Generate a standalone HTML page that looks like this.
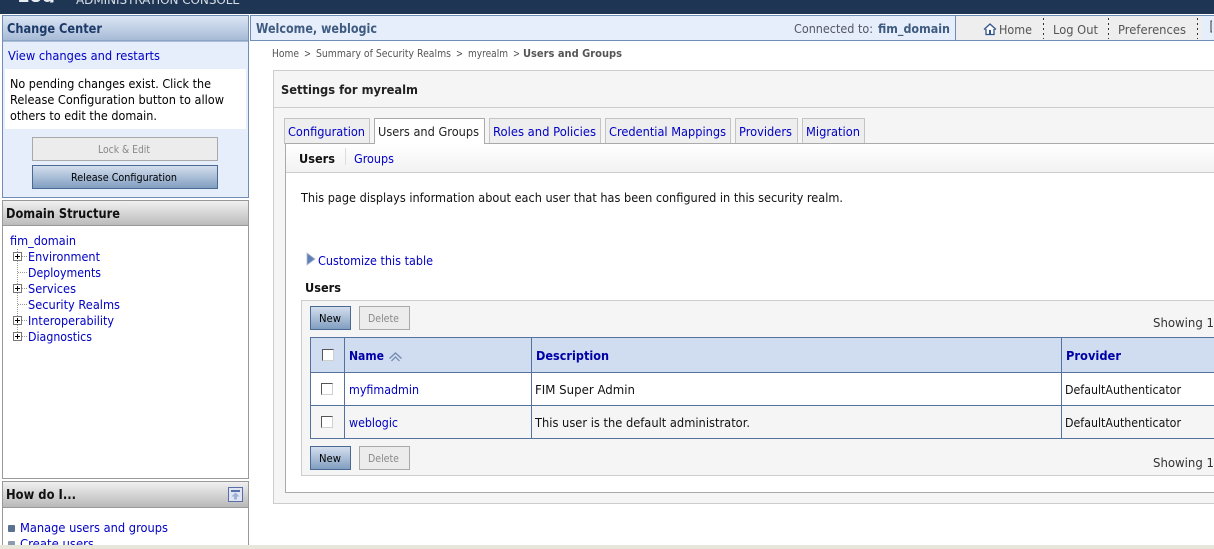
<!DOCTYPE html>
<html lang="en"><head><meta charset="utf-8"><title>Users and Groups</title>
<style>
html,body{margin:0;padding:0;width:1214px;height:549px;overflow:hidden;background:#fff}
svg{display:block}
text{font-family:"DejaVu Sans","Liberation Sans",sans-serif;font-size:12px;fill:#000;white-space:pre}
.b{font-weight:bold}
.l{fill:#0000c4}
.s{font-size:11px}
.g{fill:#555}
</style></head><body>
<svg xmlns="http://www.w3.org/2000/svg" width="1214" height="549" viewBox="0 0 1214 549">
<defs>
<linearGradient id="cc" x1="0" y1="0" x2="0" y2="1"><stop offset="0" stop-color="#dbe6f5"/><stop offset="1" stop-color="#a5b9d5"/></linearGradient>
<linearGradient id="gr" x1="0" y1="0" x2="0" y2="1"><stop offset="0" stop-color="#f0f0f0"/><stop offset="1" stop-color="#b9b9b9"/></linearGradient>
<linearGradient id="bl" x1="0" y1="0" x2="0" y2="1"><stop offset="0" stop-color="#d6e0ee"/><stop offset="1" stop-color="#7f9cc0"/></linearGradient>
<linearGradient id="st" x1="0" y1="0" x2="0" y2="1"><stop offset="0" stop-color="#fff"/><stop offset="1" stop-color="#f2f2f2"/></linearGradient>
<clipPath id="top"><rect x="0" y="0" width="1214" height="14"/></clipPath>
<clipPath id="logo"><rect x="0" y="0" width="70" height="2.500"/></clipPath>
<clipPath id="low"><rect x="0" y="0" width="1214" height="545"/></clipPath>
</defs>

<!-- top bar -->
<rect x="0" y="0" width="1214" height="14" fill="#1f3554"/>
<g clip-path="url(#logo)">
<text x="17" y="2" class="b" style="font-size:15px;fill:#e8edf3" textLength="38" lengthAdjust="spacingAndGlyphs">10g</text>
</g>
<g clip-path="url(#top)">
<text x="76" y="4" style="font-size:12px;fill:#d6dde6" textLength="164" lengthAdjust="spacing">ADMINISTRATION CONSOLE</text>
</g>

<!-- change center -->
<rect x="2.500" y="15.500" width="246" height="182" fill="#e6eefb" stroke="#6f8db5"/>
<rect x="3" y="16" width="245" height="25" fill="url(#cc)"/>
<line x1="3" y1="41" x2="248" y2="41" stroke="#6f8db5"/>
<text x="7" y="33" class="b" style="font-size:13px;fill:#1d3a68" textLength="95" lengthAdjust="spacingAndGlyphs">Change Center</text>
<text x="8" y="60" class="l" textLength="152" lengthAdjust="spacingAndGlyphs">View changes and restarts</text>
<rect x="5" y="69" width="241" height="60" fill="#fff"/>
<text x="10" y="88" textLength="201" lengthAdjust="spacingAndGlyphs">No pending changes exist. Click the</text>
<text x="10" y="104" textLength="214" lengthAdjust="spacingAndGlyphs">Release Configuration button to allow</text>
<text x="10" y="120" textLength="147" lengthAdjust="spacingAndGlyphs">others to edit the domain.</text>
<rect x="32.500" y="137.500" width="185" height="23" fill="#ececec" stroke="#a9a9a9"/>
<text x="98" y="153" class="s" style="fill:#888" textLength="52" lengthAdjust="spacingAndGlyphs">Lock &amp; Edit</text>
<rect x="32.500" y="165.500" width="185" height="23" fill="url(#bl)" stroke="#4a6a94"/>
<text x="71" y="181" class="s" textLength="106" lengthAdjust="spacingAndGlyphs">Release Configuration</text>

<!-- domain structure -->
<rect x="2.500" y="200.500" width="246" height="278" fill="#fff" stroke="#999"/>
<rect x="3" y="201" width="245" height="25" fill="url(#gr)"/>
<line x1="3" y1="225.500" x2="248" y2="225.500" stroke="#999"/>
<text x="6" y="218" class="b" style="font-size:13px;fill:#111" textLength="114" lengthAdjust="spacingAndGlyphs">Domain Structure</text>
<text x="10" y="245" class="l" textLength="66" lengthAdjust="spacingAndGlyphs">fim_domain</text>
<path d="M17.500 249V340" stroke="#999" stroke-dasharray="1 1" fill="none"/>
<path d="M22 256.500H28M18 272.500H28M22 288.500H28M18 304.500H28M22 320.500H28M22 336.500H28" stroke="#999" stroke-dasharray="1 1" fill="none"/>
<g fill="#fff" stroke="#777">
<rect x="13.500" y="252.500" width="8" height="8"/><rect x="13.500" y="284.500" width="8" height="8"/><rect x="13.500" y="316.500" width="8" height="8"/><rect x="13.500" y="332.500" width="8" height="8"/>
</g>
<path d="M15 256.500h5M17.500 254v5M15 288.500h5M17.500 286v5M15 320.500h5M17.500 318v5M15 336.500h5M17.500 334v5" stroke="#000" fill="none"/>
<text x="28" y="261" class="l" textLength="72" lengthAdjust="spacingAndGlyphs">Environment</text>
<text x="28" y="277" class="l" textLength="73" lengthAdjust="spacingAndGlyphs">Deployments</text>
<text x="28" y="293" class="l" textLength="48" lengthAdjust="spacingAndGlyphs">Services</text>
<text x="28" y="309" class="l" textLength="92" lengthAdjust="spacingAndGlyphs">Security Realms</text>
<text x="28" y="325" class="l" textLength="86" lengthAdjust="spacingAndGlyphs">Interoperability</text>
<text x="28" y="341" class="l" textLength="64" lengthAdjust="spacingAndGlyphs">Diagnostics</text>

<!-- how do I -->
<g clip-path="url(#low)">
<rect x="2.500" y="481.500" width="246" height="80" fill="#fff" stroke="#999"/>
<rect x="3" y="482" width="245" height="25" fill="url(#gr)"/>
<line x1="3" y1="507.500" x2="248" y2="507.500" stroke="#999"/>
<text x="6" y="499" class="b" style="font-size:13px;fill:#111" textLength="70" lengthAdjust="spacingAndGlyphs">How do I...</text>
<rect x="228.500" y="487.500" width="14" height="14" fill="#dfe5f2" stroke="#5a6fa8"/>
<rect x="231" y="490" width="9" height="2" fill="#5a6fa8"/>
<path d="M235.500 492.500l4 4h-2.500v3h-3v-3h-2.500z" fill="#9db0d6"/>
<rect x="8" y="525" width="7" height="7" rx="1" fill="#5c7190"/>
<rect x="8" y="541" width="7" height="7" rx="1" fill="#8d9bb0"/>
<text x="20" y="532" class="l" textLength="148" lengthAdjust="spacingAndGlyphs">Manage users and groups</text>
<text x="20" y="548" class="l" textLength="74" lengthAdjust="spacingAndGlyphs">Create users</text>
</g>

<!-- welcome header -->
<rect x="250.500" y="15.500" width="964" height="25" fill="#e6eefb" stroke="#6f8db5"/>
<rect x="956" y="16" width="246" height="24" fill="#eeeeee"/>
<line x1="955.500" y1="16" x2="955.500" y2="40" stroke="#6f8db5"/>
<text x="256" y="33" class="b" style="font-size:13px;fill:#3f5b80" textLength="121" lengthAdjust="spacingAndGlyphs">Welcome, weblogic</text>
<text x="794" y="33" style="fill:#556" textLength="79" lengthAdjust="spacingAndGlyphs">Connected to:</text>
<text x="878" y="33" class="b" style="fill:#3f5b80" textLength="72" lengthAdjust="spacingAndGlyphs">fim_domain</text>
<path d="M984 29.500l6-5.500 6 5.500M986 29v5.500h8V29" fill="#fff" stroke="#2f5488" stroke-width="1.300"/>
<rect x="989" y="30" width="2" height="4" fill="#2f5488"/>
<text x="999" y="34" style="fill:#555" textLength="33" lengthAdjust="spacingAndGlyphs">Home</text>
<text x="1053" y="34" style="fill:#555" textLength="45" lengthAdjust="spacingAndGlyphs">Log Out</text>
<text x="1118" y="34" style="fill:#555" textLength="68" lengthAdjust="spacingAndGlyphs">Preferences</text>
<path d="M1043.500 18V39M1108.500 18V39M1197.500 18V39" stroke="#333" stroke-dasharray="2 3" fill="none"/>
<path d="M1212 21h-1v11h1" fill="none" stroke="#333"/>

<!-- breadcrumb -->
<text x="272" y="57" class="s g" textLength="27" lengthAdjust="spacingAndGlyphs">Home</text>
<text x="304" y="57" class="s g" textLength="7" lengthAdjust="spacingAndGlyphs">&gt;</text>
<text x="316" y="57" class="s g" textLength="135" lengthAdjust="spacingAndGlyphs">Summary of Security Realms</text>
<text x="456" y="57" class="s g" textLength="7" lengthAdjust="spacingAndGlyphs">&gt;</text>
<text x="468" y="57" class="s g" textLength="40" lengthAdjust="spacingAndGlyphs">myrealm</text>
<text x="513" y="57" class="s g" textLength="7" lengthAdjust="spacingAndGlyphs">&gt;</text>
<text x="523" y="57" class="s b g" textLength="99" lengthAdjust="spacingAndGlyphs">Users and Groups</text>

<!-- settings panel -->
<rect x="273.500" y="70.500" width="942" height="433" fill="#f5f5f5" stroke="#ccc"/>
<line x1="274" y1="107.500" x2="1214" y2="107.500" stroke="#ccc"/>
<text x="281" y="94" class="b" style="fill:#222" textLength="137" lengthAdjust="spacingAndGlyphs">Settings for myrealm</text>

<!-- content -->
<rect x="285" y="143" width="930" height="349" fill="#fff"/>
<path d="M1214 143.500H285.500V492.500H1214" fill="none" stroke="#aaa"/>
<rect x="286" y="144" width="928" height="28" fill="url(#st)"/>
<line x1="286" y1="172.500" x2="1214" y2="172.500" stroke="#ccc"/>

<!-- tabs -->
<g fill="#eeeeee" stroke="#c4c4c4">
<rect x="284.500" y="118.500" width="85" height="25"/>
<rect x="489.500" y="118.500" width="111" height="25"/>
<rect x="605.500" y="118.500" width="125" height="25"/>
<rect x="735.500" y="118.500" width="62" height="25"/>
<rect x="802.500" y="118.500" width="62" height="25"/>
</g>
<path d="M285 143.500H1214" stroke="#aaa" fill="none"/>
<path d="M374.500 144V118.500H484.500V144" fill="#fff" stroke="#aaa"/>
<rect x="375" y="143" width="109" height="2" fill="#fff"/>
<text x="288" y="136" class="l" textLength="77" lengthAdjust="spacingAndGlyphs">Configuration</text>
<text x="378" y="136" style="fill:#222" textLength="101" lengthAdjust="spacingAndGlyphs">Users and Groups</text>
<text x="493" y="136" class="l" textLength="103" lengthAdjust="spacingAndGlyphs">Roles and Policies</text>
<text x="609" y="136" class="l" textLength="117" lengthAdjust="spacingAndGlyphs">Credential Mappings</text>
<text x="739" y="136" class="l" textLength="53" lengthAdjust="spacingAndGlyphs">Providers</text>
<text x="806" y="136" class="l" textLength="54" lengthAdjust="spacingAndGlyphs">Migration</text>

<text x="299" y="163" class="b" style="fill:#111" textLength="36" lengthAdjust="spacingAndGlyphs">Users</text>
<line x1="345.500" y1="148" x2="345.500" y2="165" stroke="#ddd"/>
<text x="354" y="163" class="l" textLength="40" lengthAdjust="spacingAndGlyphs">Groups</text>

<text x="301" y="202" style="fill:#111" textLength="542" lengthAdjust="spacingAndGlyphs">This page displays information about each user that has been configured in this security realm.</text>

<path d="M307 253l8 6-8 6z" fill="#5f7fb5" stroke="#a9b9d4" stroke-width=".8"/>
<text x="318" y="265" class="l" textLength="115" lengthAdjust="spacingAndGlyphs">Customize this table</text>
<text x="305" y="292" class="b" style="fill:#111" textLength="36" lengthAdjust="spacingAndGlyphs">Users</text>

<!-- table container -->
<rect x="301.500" y="300.500" width="914" height="175" fill="#f5f5f5" stroke="#ccc"/>

<rect x="310.500" y="306.500" width="40" height="23" fill="url(#bl)" stroke="#4a6a94"/>
<text x="319" y="322" class="s" textLength="22" lengthAdjust="spacingAndGlyphs">New</text>
<rect x="359.500" y="306.500" width="50" height="23" fill="#ececec" stroke="#a9a9a9"/>
<text x="368" y="322" class="s" style="fill:#888" textLength="31" lengthAdjust="spacingAndGlyphs">Delete</text>
<text x="1153" y="327" style="fill:#333" textLength="61" lengthAdjust="spacingAndGlyphs">Showing 1</text>

<rect x="310" y="337" width="904" height="35" fill="#d0dcef"/>
<rect x="310" y="372" width="904" height="33" fill="#fff"/>
<rect x="310" y="405" width="904" height="33" fill="#f5f5f5"/>
<path d="M1214 337.500H310.500V438.500H1214M311 372.500H1214M311 405.500H1214M344.500 337V438M531.500 337V438M1061.500 337V438" fill="none" stroke="#55729c"/>

<g fill="#fff" stroke="#d0d0d0">
<rect x="322.500" y="349.500" width="11" height="11"/>
<rect x="321.500" y="383.500" width="11" height="11"/>
<rect x="321.500" y="416.500" width="11" height="11"/>
</g>
<path d="M322.500 360.500v-11h11M321.500 394.500v-11h11M321.500 427.500v-11h11" fill="none" stroke="#555"/>
<text x="349" y="360" class="b" style="fill:#0000a8" textLength="35" lengthAdjust="spacingAndGlyphs">Name</text>
<path d="M389.500 358.500l6-5.500 6 5.500M391.500 361l4-4 4 4" fill="none" stroke="#6d86ad" stroke-width="1.200"/>
<text x="536" y="360" class="b" style="fill:#0000a8" textLength="73" lengthAdjust="spacingAndGlyphs">Description</text>
<text x="1066" y="360" class="b" style="fill:#0000a8" textLength="55" lengthAdjust="spacingAndGlyphs">Provider</text>

<text x="349" y="394" class="l" textLength="70" lengthAdjust="spacingAndGlyphs">myfimadmin</text>
<text x="535" y="394" style="fill:#111" textLength="100" lengthAdjust="spacingAndGlyphs">FIM Super Admin</text>
<text x="1065" y="394" style="fill:#111" textLength="116" lengthAdjust="spacingAndGlyphs">DefaultAuthenticator</text>
<text x="349" y="427" class="l" textLength="49" lengthAdjust="spacingAndGlyphs">weblogic</text>
<text x="535" y="427" style="fill:#111" textLength="215" lengthAdjust="spacingAndGlyphs">This user is the default administrator.</text>
<text x="1065" y="427" style="fill:#111" textLength="116" lengthAdjust="spacingAndGlyphs">DefaultAuthenticator</text>

<rect x="310.500" y="446.500" width="40" height="23" fill="url(#bl)" stroke="#4a6a94"/>
<text x="319" y="462" class="s" textLength="22" lengthAdjust="spacingAndGlyphs">New</text>
<rect x="359.500" y="446.500" width="50" height="23" fill="#ececec" stroke="#a9a9a9"/>
<text x="368" y="462" class="s" style="fill:#888" textLength="31" lengthAdjust="spacingAndGlyphs">Delete</text>
<text x="1153" y="467" style="fill:#333" textLength="61" lengthAdjust="spacingAndGlyphs">Showing 1</text>

<!-- bottom strip -->
<rect x="0" y="545" width="1214" height="4" fill="#e8e6da"/>
</svg>
</body></html>
